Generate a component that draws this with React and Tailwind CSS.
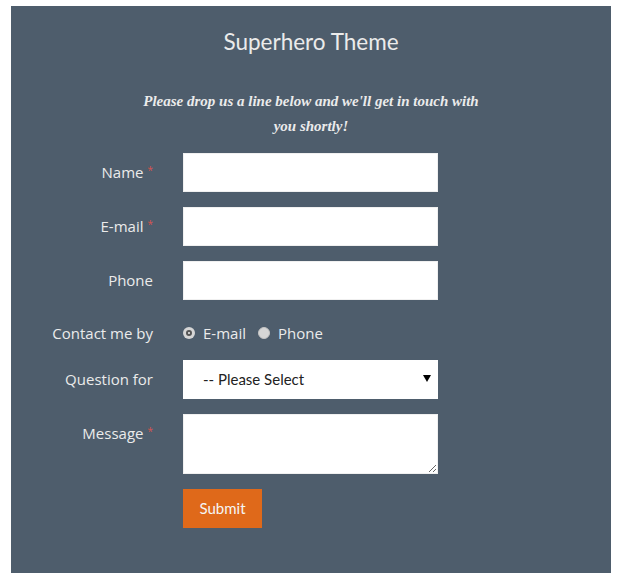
import React from "react";

const labelCls =
  "w-[142px] shrink-0 h-[39px] flex items-center justify-end text-[15px] text-[#ebebeb] [font-family:'Open_Sans',sans-serif]";

function Req() {
  return <span className="text-[#d9534f] text-[10px] ml-[4px] self-start mt-[10px]">*</span>;
}

function Row({ label, req, children, className = "" }) {
  return (
    <div className={"flex items-start mb-[15px] " + className}>
      <div className={labelCls}>
        <span>{label}</span>
        {req && <Req />}
      </div>
      <div className="ml-[30px]">{children}</div>
    </div>
  );
}

const inputCls =
  "block w-[255px] h-[39px] bg-white border border-[#f0f0f0] outline-none";

export default function App() {
  return (
    <div className="w-[620px] h-[580px] bg-white pt-[6px] pl-[11px]">
      <div className="w-[600px] h-[567px] bg-[#4e5d6c] flex flex-col items-center">
        <h1 className="mt-[21px] text-[22.5px] leading-[30px] text-[#ebebeb] [font-family:Lato,sans-serif]">
          Superhero Theme
        </h1>
        <p className="mt-[32px] w-[345px] text-center text-[15px] leading-[25px] font-bold italic text-[#ebebeb] [font-family:'Liberation_Serif',serif]">
          Please drop us a line below and we'll get in touch with you shortly!
        </p>
        <form className="self-start mt-[14px]" onSubmit={(e) => e.preventDefault()}>
          <Row label="Name" req>
            <input className={inputCls} />
          </Row>
          <Row label="E-mail" req>
            <input className={inputCls} />
          </Row>
          <Row label="Phone">
            <input className={inputCls} />
          </Row>
          <div className="flex items-center h-[30px] mb-[15px] mt-[0px]">
            <div className={labelCls + " !h-[30px] pt-[6px]"}>Contact me by</div>
            <div className="ml-[30px] flex items-center pt-[6px] text-[15px] text-[#ebebeb] [font-family:'Open_Sans',sans-serif]">
              <span className="w-[12px] h-[12px] rounded-full bg-[#d6d6d6] flex items-center justify-center">
                <span className="w-[6px] h-[6px] rounded-full border-[2px] border-[#555] bg-[#eee]"></span>
              </span>
              <span className="ml-[8px]">E-mail</span>
              <span className="ml-[12px] w-[12px] h-[12px] rounded-full bg-[#d6d6d6] border border-[#c4c4c4]"></span>
              <span className="ml-[8px]">Phone</span>
            </div>
          </div>
          <Row label="Question for">
            <div className="relative w-[255px] h-[39px] bg-white">
              <div className="absolute left-[20px] top-0 h-[39px] flex items-center text-[15px] text-[#222] [font-family:Lato,sans-serif]">
                -- Please Select
              </div>
              <div className="absolute right-[7px] top-[15px] w-0 h-0 border-l-[4px] border-r-[4px] border-t-[7px] border-l-transparent border-r-transparent border-t-black"></div>
            </div>
          </Row>
          <Row label="Message" req>
            <textarea className="block w-[255px] h-[60px] bg-white border border-[#f0f0f0] outline-none"></textarea>
          </Row>
          <div className="flex">
            <div className="w-[142px] shrink-0"></div>
            <button
              type="submit"
              className="ml-[30px] w-[79px] h-[39px] bg-[#df691a] text-[#f5f5f5] text-[15px] [font-family:Lato,sans-serif]"
            >
              Submit
            </button>
          </div>
        </form>
      </div>
    </div>
  );
}
